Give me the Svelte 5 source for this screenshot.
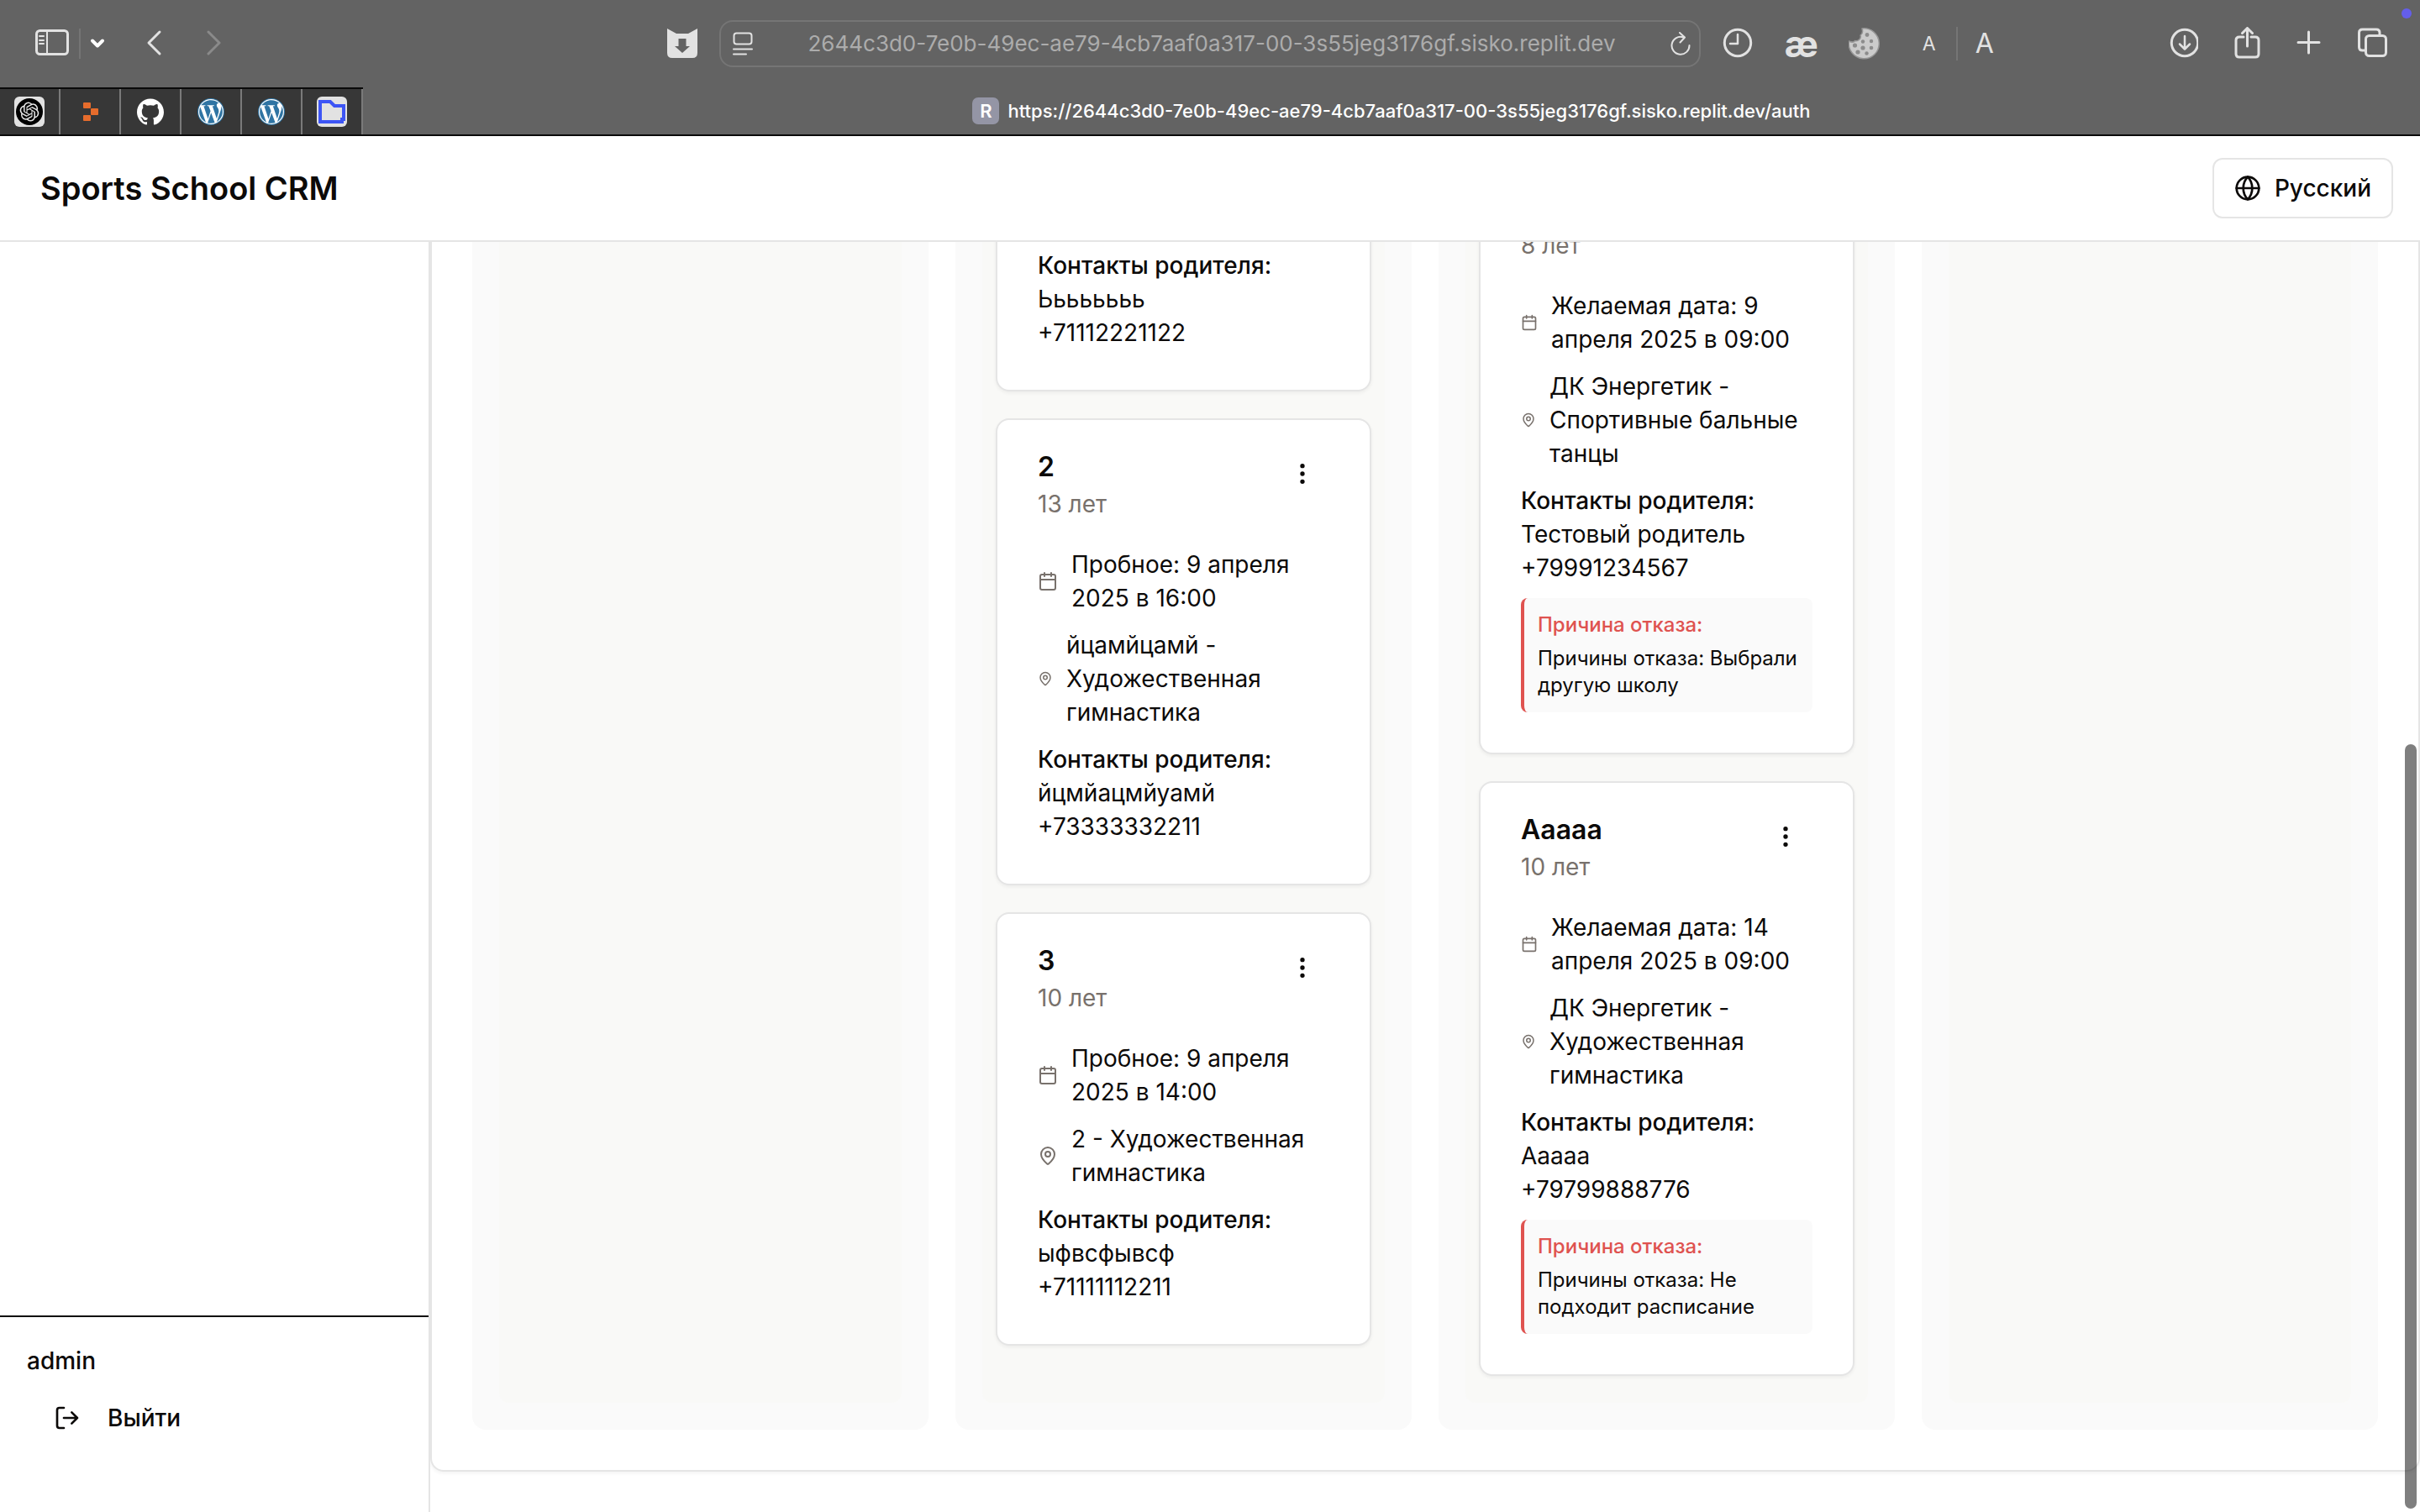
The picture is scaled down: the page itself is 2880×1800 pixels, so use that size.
<script lang="ts">
  type Row = { kind: 'calendar' | 'pin'; size: 'small' | 'narrow' | 'regular'; text: string };
  type Student = {
    name?: string;
    age?: string;
    rows: Row[];
    parent: string;
    phone: string;
    reason?: string;
  };
  type Column = { id: string; short?: boolean; students: Student[] };

  const host = '2644c3d0-7e0b-49ec-ae79-4cb7aaf0a317-00-3s55jeg3176gf.sisko.replit.dev';

  const columns: Column[] = [
    { id: 'new', students: [] },
    {
      id: 'trial',
      short: true,
      students: [
        { rows: [], parent: 'Ьььььььь', phone: '+71112221122' },
        {
          name: '2',
          age: '13 лет',
          rows: [
            { kind: 'calendar', size: 'regular', text: 'Пробное: 9 апреля\n2025 в 16:00' },
            { kind: 'pin', size: 'small', text: 'йцамйцамй -\nХудожественная\nгимнастика' }
          ],
          parent: 'йцмйацмйуамй',
          phone: '+73333332211'
        },
        {
          name: '3',
          age: '10 лет',
          rows: [
            { kind: 'calendar', size: 'regular', text: 'Пробное: 9 апреля\n2025 в 14:00' },
            { kind: 'pin', size: 'regular', text: '2 - Художественная\nгимнастика' }
          ],
          parent: 'ыфвсфывсф',
          phone: '+71111112211'
        }
      ]
    },
    {
      id: 'refused',
      students: [
        {
          age: '8 лет',
          rows: [
            { kind: 'calendar', size: 'narrow', text: 'Желаемая дата: 9\nапреля 2025 в 09:00' },
            { kind: 'pin', size: 'small', text: 'ДК Энергетик -\nСпортивные бальные\nтанцы' }
          ],
          parent: 'Тестовый родитель',
          phone: '+79991234567',
          reason: 'Причины отказа: Выбрали\nдругую школу'
        },
        {
          name: 'Ааааа',
          age: '10 лет',
          rows: [
            { kind: 'calendar', size: 'narrow', text: 'Желаемая дата: 14\nапреля 2025 в 09:00' },
            { kind: 'pin', size: 'small', text: 'ДК Энергетик -\nХудожественная\nгимнастика' }
          ],
          parent: 'Ааааа',
          phone: '+79799888776',
          reason: 'Причины отказа: Не\nподходит расписание'
        }
      ]
    },
    { id: 'archive', students: [] }
  ];
</script>

{#snippet wordpress()}
  <svg class="fav" viewBox="0 0 36 36" aria-hidden="true">
    <circle cx="18" cy="18" r="16" fill="#2f74a3" />
    <circle cx="18" cy="18" r="15" fill="#fff" />
    <g transform="translate(2.6 2.6) scale(1.283)" fill="#2f74a3">
      <path d="M21.469 6.825c.84 1.537 1.318 3.3 1.318 5.175 0 3.979-2.156 7.456-5.363 9.325l3.295-9.527c.615-1.54.82-2.771.82-3.864 0-.405-.026-.78-.07-1.11m-7.981.105c.647-.03 1.232-.105 1.232-.105.582-.075.514-.93-.067-.899 0 0-1.755.135-2.88.135-1.064 0-2.85-.15-2.85-.15-.585-.03-.661.855-.075.885 0 0 .54.061 1.125.09l1.68 4.605-2.37 7.08L5.354 6.9c.649-.03 1.234-.1 1.234-.1.585-.075.516-.93-.065-.896 0 0-1.746.138-2.874.138-.2 0-.438-.008-.69-.015C4.911 3.15 8.235 1.215 12 1.215c2.809 0 5.365 1.072 7.286 2.833-.046-.003-.091-.009-.141-.009-1.06 0-1.812.923-1.812 1.914 0 .89.513 1.643 1.06 2.531.411.72.89 1.643.89 2.977 0 .915-.354 1.994-.821 3.479l-1.075 3.585-3.9-11.61.001.014zM12 22.784c-1.059 0-2.081-.153-3.048-.437l3.237-9.406 3.315 9.087c.024.053.05.101.078.149-1.12.393-2.325.609-3.582.609M1.211 12c0-1.564.336-3.05.935-4.39L7.29 21.709C3.694 19.96 1.212 16.271 1.211 12" />
    </g>
  </svg>
{/snippet}

{#snippet rowIcon(row: Row)}
  <svg class="row-icon {row.size}" viewBox="0 0 24 24" aria-hidden="true">
    {#if row.kind === 'calendar'}
      <path d="M8 2v4M16 2v4M3 10h18" />
      <rect x="3" y="4" width="18" height="18" rx="2" />
    {:else}
      <path d="M20 10c0 4.993-5.539 10.193-7.399 11.799a1 1 0 0 1-1.202 0C9.539 20.193 4 14.993 4 10a8 8 0 0 1 16 0" />
      <circle cx="12" cy="10" r="3" />
    {/if}
  </svg>
{/snippet}

<div class="window">
  <div class="browser">
    <div class="toolbar">
      <div class="tools">
        <button class="tool" aria-label="Боковое меню">
          <svg viewBox="0 0 40 40"><rect x="1.5" y="4.5" width="37" height="28" rx="4" /><path d="M14 5v27M5 11h5M5 16h5M5 20h5" stroke-width="2" /></svg>
        </button>
        <span class="divider first"></span>
        <button class="tool slim" aria-label="Группы вкладок">
          <svg viewBox="0 0 24 40"><path class="bright" d="M6 16.500l6 6 6-6" /></svg>
        </button>
        <button class="tool" aria-label="Назад">
          <svg viewBox="0 0 40 40"><path d="M30 6L17 19l13 13" /></svg>
        </button>
        <button class="tool dim" aria-label="Вперёд" disabled>
          <svg viewBox="0 0 40 40"><path d="M16 6l13 13-13 13" /></svg>
        </button>
        <button class="tool shield" aria-label="Загрузчик">
          <svg viewBox="0 0 40 40"><path class="solid" d="M2 2l11 6v5h14V8l11-6v29q0 6-6 6H8q-6 0-6-6z" /><path class="solid" d="M13 8h14v6H13z" /><path class="hole" d="M15.500 14h9v9h4.500L20 31l-9-8h4.500z" /></svg>
        </button>
      </div>

      <div class="address">
        <svg class="page-icon" viewBox="0 0 24 30" aria-hidden="true"><rect x="1.500" y="2.500" width="21" height="13" rx="3" /><path d="M1 21.500h22M1 27.500h15" /></svg>
        <input class="url" type="text" aria-label="Адрес" value={host} readonly />
        <button class="reload" aria-label="Обновить">
          <svg viewBox="0 0 24 28"><path d="M15 6.200A10.500 10.500 0 1 0 22.500 16M11 1l6 5.500-5.500 6" /></svg>
        </button>
      </div>

      <div class="tools right">
        <button class="tool" aria-label="История">
          <svg viewBox="0 0 40 40"><circle cx="20" cy="19" r="15.700" /><path d="M20 9v11H11" stroke-width="2.500" /></svg>
        </button>
        <button class="tool ae" aria-label="Расширение">æ</button>
        <button class="tool" aria-label="Cookies">
          <svg viewBox="2 0 40 40">
            <path d="M18 2A18 18 0 1 1 2.500 17c3 1.500 6 1.500 7-.500 4 1 8-3 6.500-6.500 3-2 3-5 2-8z" fill="#cbcbcb" stroke="#969696" stroke-width="1.500" />
            <g class="crumbs"><circle cx="24" cy="9.500" r="2.400" /><circle cx="29" cy="17" r="2.200" /><circle cx="19" cy="17.500" r="2.200" /><circle cx="9.500" cy="22" r="2.600" /><circle cx="19" cy="25" r="2.600" /><circle cx="29" cy="25" r="2.300" /><circle cx="13" cy="30" r="2.600" /><circle cx="23.500" cy="31.500" r="2.200" /></g>
          </svg>
        </button>
        <button class="tool small-a" aria-label="Уменьшить текст">A</button>
        <span class="divider"></span>
        <button class="tool large-a" aria-label="Увеличить текст">A</button>
        <button class="tool push" aria-label="Загрузки">
          <svg viewBox="-6 0 40 40"><circle cx="18" cy="19" r="15.700" /><path d="M18 11v15M12 20.500l6 6 6-6" stroke-width="2.500" /></svg>
        </button>
        <button class="tool" aria-label="Поделиться">
          <svg viewBox="-4 0 40 40"><path d="M14 12H9q-4 0-4 4v16q0 4 4 4h19q4 0 4-4V16q0-4-4-4h-5M18.500 23V1.500M12.500 7.500l6-6 6 6" /></svg>
        </button>
        <button class="tool" aria-label="Новая вкладка">
          <svg viewBox="-2 0 40 40"><path d="M17.500 6v25M5 18.500h25" /></svg>
        </button>
        <button class="tool" aria-label="Все вкладки">
          <svg viewBox="0 0 40 40"><rect x="11.500" y="10.500" width="24" height="24" rx="4" /><path d="M11 28H7.500q-4 0-4-4V7q0-4 4-4H24q4 0 4 4v3" /></svg>
        </button>
      </div>
      <span class="indicator"></span>
    </div>

    <div class="tabs">
      <div class="pinned">
        <button class="pin-tab" aria-label="ChatGPT">
          <svg class="fav" viewBox="0 0 36 36"><rect width="36" height="36" rx="6" fill="#e2e2e2" /><circle cx="18" cy="18" r="16" fill="#000" /><g transform="translate(6.600 6.600) scale(.95)" fill="#e8e8e8"><path d="M22.282 9.821a5.985 5.985 0 0 0-.516-4.911 6.046 6.046 0 0 0-6.51-2.9A6.065 6.065 0 0 0 4.981 4.182a5.985 5.985 0 0 0-3.998 2.9 6.046 6.046 0 0 0 .743 7.097 5.98 5.98 0 0 0 .511 4.911 6.051 6.051 0 0 0 6.515 2.9A5.985 5.985 0 0 0 13.26 24a6.056 6.056 0 0 0 5.772-4.206 5.99 5.99 0 0 0 3.998-2.9 6.056 6.056 0 0 0-.748-7.073zM13.26 22.43a4.476 4.476 0 0 1-2.876-1.041l.142-.08 4.778-2.758a.795.795 0 0 0 .393-.682v-6.737l2.02 1.169a.071.071 0 0 1 .038.052v5.583a4.504 4.504 0 0 1-4.495 4.494zM3.6 18.304a4.47 4.47 0 0 1-.535-3.014l.142.085 4.783 2.759a.771.771 0 0 0 .78 0l5.843-3.369v2.332a.08.08 0 0 1-.033.062L9.74 19.95a4.5 4.5 0 0 1-6.14-1.646zM2.34 7.896a4.485 4.485 0 0 1 2.366-1.973V11.6a.766.766 0 0 0 .388.677l5.815 3.354-2.02 1.169a.076.076 0 0 1-.072 0l-4.83-2.787A4.504 4.504 0 0 1 2.34 7.872zm16.597 3.855l-5.833-3.387L15.119 7.2a.076.076 0 0 1 .071 0l4.83 2.791a4.494 4.494 0 0 1-.676 8.105v-5.678a.79.79 0 0 0-.407-.667zm2.01-3.023l-.141-.085-4.774-2.782a.776.776 0 0 0-.785 0L9.409 9.23V6.897a.066.066 0 0 1 .028-.061l4.83-2.787a4.5 4.5 0 0 1 6.68 4.66zM8.307 12.863l-2.02-1.164a.08.08 0 0 1-.038-.057V6.075a4.5 4.5 0 0 1 7.375-3.454l-.142.08-4.778 2.758a.795.795 0 0 0-.393.681zm1.097-2.365l2.602-1.5 2.607 1.5v2.999l-2.597 1.5-2.607-1.5z" /></g></svg>
        </button>
        <button class="pin-tab" aria-label="Replit">
          <svg class="fav" viewBox="0 0 36 36" fill="#e66c2c"><rect x="10" y="7" width="9" height="7" rx="1" /><rect x="19" y="14" width="9" height="8" rx="1" /><rect x="10" y="22" width="9" height="7" rx="1" /></svg>
        </button>
        <button class="pin-tab" aria-label="GitHub">
          <svg class="fav" viewBox="0 0 36 36"><g transform="translate(2 2) scale(1.333)" fill="#fff"><path d="M12 .297c-6.630 0-12 5.373-12 12 0 5.303 3.438 9.800 8.205 11.385.600.113.820-.258.820-.577 0-.285-.010-1.040-.015-2.040-3.338.724-4.042-1.610-4.042-1.610C4.422 18.070 3.633 17.700 3.633 17.700c-1.087-.744.084-.729.084-.729 1.205.084 1.838 1.236 1.838 1.236 1.070 1.835 2.809 1.305 3.495.998.108-.776.417-1.305.760-1.605-2.665-.300-5.466-1.332-5.466-5.930 0-1.310.465-2.380 1.235-3.220-.135-.303-.540-1.523.105-3.176 0 0 1.005-.322 3.300 1.230.960-.267 1.980-.399 3-.405 1.020.006 2.040.138 3 .405 2.280-1.552 3.285-1.230 3.285-1.230.645 1.653.240 2.873.120 3.176.765.840 1.230 1.910 1.230 3.220 0 4.610-2.805 5.625-5.475 5.920.420.360.810 1.096.810 2.220 0 1.606-.015 2.896-.015 3.286 0 .315.210.690.825.570C20.565 22.092 24 17.592 24 12.297c0-6.627-5.373-12-12-12" /></g></svg>
        </button>
        <button class="pin-tab" aria-label="WordPress">{@render wordpress()}</button>
        <button class="pin-tab" aria-label="WordPress">{@render wordpress()}</button>
        <button class="pin-tab" aria-label="Файлы">
          <svg class="fav" viewBox="0 0 36 36"><rect width="36" height="36" rx="6" fill="#e2e2e2" /><path d="M4 30V6h12l5 5h11v16h-2v3z" fill="none" stroke="#3d55f5" stroke-width="4" /></svg>
        </button>
      </div>
      <button class="tab">
        <span class="badge">R</span>
        <span>https://{host}/auth</span>
      </button>
    </div>
  </div>

  <header class="header">
    <h1>Sports School CRM</h1>
    <button class="language">
      <svg class="icon" viewBox="0 0 24 24" aria-hidden="true"><circle cx="12" cy="12" r="10" /><path d="M12 2a14.500 14.500 0 0 0 0 20 14.500 14.500 0 0 0 0-20M2 12h20" /></svg>
      Русский
    </button>
  </header>

  <div class="body">
    <aside class="sidebar">
      <div class="account">
        <p class="user">admin</p>
        <button class="logout">
          <svg class="icon" viewBox="0 0 24 24" aria-hidden="true"><path d="M9 21H5a2 2 0 0 1-2-2V5a2 2 0 0 1 2-2h4M16 17l5-5-5-5M21 12H9" /></svg>
          Выйти
        </button>
      </div>
    </aside>

    <main class="content">
      <section class="board">
        {#each columns as column (column.id)}
          <div class="column">
            <div class="cards" class:short={column.short}>
              {#each column.students as student}
                <article class="card">
                  <header class="card-head">
                    <div>
                      <h2>{student.name ?? ''}</h2>
                      {#if student.age}
                        <p class="age">{student.age}</p>
                      {/if}
                    </div>
                    {#if student.name}
                      <button class="more" aria-label="Действия">
                        <svg class="icon dots" viewBox="0 0 24 24"><circle cx="12" cy="5" r="1" /><circle cx="12" cy="12" r="1" /><circle cx="12" cy="19" r="1" /></svg>
                      </button>
                    {/if}
                  </header>
                  <div class="card-body">
                    {#each student.rows as row}
                      <div class="row">
                        {@render rowIcon(row)}
                        <span>{row.text}</span>
                      </div>
                    {/each}
                    <div>
                      <p class="label">Контакты родителя:</p>
                      <p>{student.parent}</p>
                      <p>{student.phone}</p>
                    </div>
                    {#if student.reason}
                      <div class="reason">
                        <p class="reason-title">Причина отказа:</p>
                        <p class="reason-text">{student.reason}</p>
                      </div>
                    {/if}
                  </div>
                </article>
              {/each}
            </div>
          </div>
        {/each}
      </section>
    </main>
    <div class="scrollbar"></div>
  </div>
</div>

<style>
  :global(body) {
    margin: 0;
    background: #fff;
  }
  .window {
    display: flex;
    flex-direction: column;
    height: 100vh;
    overflow: hidden;
    font-family: Inter, 'Liberation Sans', sans-serif;
    font-size: 28px;
    line-height: 40px;
    color: #0c0a09;
  }
  h1, h2, p {
    margin: 0;
  }
  button {
    padding: 0;
    border: 0;
    background: none;
    color: inherit;
    font: inherit;
  }
  svg {
    flex-shrink: 0;
    display: block;
  }

  .browser {
    background: #636363;
    border-bottom: 2px solid #0a0a0a;
  }
  .toolbar {
    position: relative;
    display: grid;
    grid-template-columns: 22fr 30fr 22fr;
    align-items: center;
    height: 104px;
  }
  .tools {
    display: flex;
    align-items: center;
    gap: 32px;
    padding: 0 24px 0 42px;
  }
  .tools.right {
    gap: 36px;
    padding: 0 36px 0 24px;
  }
  .tool {
    width: 40px;
    height: 40px;
    flex-shrink: 0;
    color: #e2e2e2;
  }
  .tool svg {
    width: 100%;
    height: 40px;
  }
  .tool svg,
  .address svg {
    fill: none;
    stroke: #e2e2e2;
    stroke-width: 3;
    stroke-linecap: round;
    stroke-linejoin: round;
  }
  .slim {
    width: 24px;
  }
  .tool .bright {
    stroke: #fff;
    stroke-width: 4;
  }
  .tool.dim svg {
    stroke: #8a8a8a;
  }
  .tool .solid {
    fill: #e2e2e2;
    stroke: none;
  }
  .tool .hole {
    fill: #636363;
    stroke: none;
  }
  .crumbs {
    fill: #8c8c8c;
    stroke: none;
  }
  .shield,
  .push {
    margin-left: auto;
  }
  .divider {
    width: 2px;
    height: 40px;
    margin: 0 -24px;
    background: #757575;
  }
  .divider.first {
    height: 36px;
    margin: 0 -24px 0 -20px;
  }
  .ae {
    font-size: 44px;
    font-weight: 700;
    line-height: 36px;
  }
  .small-a {
    font-size: 23px;
  }
  .large-a {
    font-size: 32px;
  }
  .indicator {
    position: absolute;
    top: 10px;
    right: 10px;
    width: 12px;
    height: 12px;
    border-radius: 50%;
    background: #645eea;
  }
  .address {
    display: flex;
    align-items: center;
    gap: 16px;
    box-sizing: border-box;
    height: 56px;
    padding: 0 10px 0 14px;
    border: 2px solid #757575;
    border-radius: 16px;
  }
  .address .page-icon {
    width: 24px;
    height: 30px;
    stroke-width: 2;
  }
  .url {
    flex: 1;
    min-width: 0;
    padding: 0;
    border: 0;
    outline: 0;
    background: none;
    color: #acacac;
    font: inherit;
    font-size: 26px;
    text-align: center;
  }
  .reload svg {
    width: 24px;
    height: 28px;
    stroke-width: 2;
  }

  .tabs {
    display: flex;
    height: 56px;
  }
  .pinned {
    display: flex;
    box-sizing: border-box;
    border-top: 2px solid #0a0a0a;
    background: #373737;
  }
  .pin-tab {
    display: flex;
    align-items: center;
    justify-content: center;
    box-sizing: border-box;
    width: 72px;
    border-right: 2px solid #7a7a7a;
  }
  .fav {
    width: 36px;
    height: 36px;
  }
  .tab {
    flex: 1;
    display: flex;
    align-items: center;
    justify-content: center;
    gap: 10px;
    color: #fff;
    font-size: 22px;
    font-weight: 500;
  }
  .badge {
    width: 32px;
    height: 32px;
    border-radius: 7px;
    background: #9495a5;
    font-weight: 600;
    line-height: 32px;
    text-align: center;
  }

  .header {
    display: flex;
    align-items: center;
    justify-content: space-between;
    box-sizing: border-box;
    flex-shrink: 0;
    height: 126px;
    padding: 0 32px 0 48px;
    border-bottom: 2px solid #e5e5e5;
    background: #fff;
  }
  h1 {
    font-size: 38px;
    font-weight: 600;
    line-height: 56px;
  }
  .icon {
    width: 32px;
    height: 32px;
    fill: none;
    stroke: currentColor;
    stroke-width: 2;
    stroke-linecap: round;
    stroke-linejoin: round;
  }
  .language {
    display: flex;
    align-items: center;
    gap: 16px;
    height: 72px;
    padding: 0 24px;
    border: 2px solid #e5e5e5;
    border-radius: 12px;
    font-weight: 500;
  }

  .body {
    position: relative;
    flex: 1;
    display: flex;
    min-height: 0;
  }
  .sidebar {
    display: flex;
    flex-direction: column;
    justify-content: flex-end;
    box-sizing: border-box;
    width: 512px;
    flex-shrink: 0;
    border-right: 2px solid #e5e5e5;
  }
  .account {
    padding: 32px 32px 76px;
    border-top: 2px solid #0c0a09;
  }
  .user,
  .logout {
    font-weight: 500;
  }
  .logout {
    display: flex;
    align-items: center;
    gap: 32px;
    height: 72px;
    margin-top: 12px;
    padding: 0 32px;
  }
  .content {
    flex: 1;
    display: flex;
    flex-direction: column;
    justify-content: flex-end;
    min-width: 0;
    overflow: hidden;
    padding-bottom: 48px;
  }
  .board {
    display: grid;
    grid-template-columns: repeat(4, 1fr);
    gap: 32px;
    padding: 48px;
    border: 2px solid #e5e5e5;
    border-radius: 16px;
    box-shadow: 0 2px 4px rgba(0, 0, 0, 0.05);
  }
  .column {
    display: flex;
    flex-direction: column;
    padding: 32px;
    border-radius: 16px;
    background: #fafafa;
  }
  .cards {
    flex: 1;
    display: flex;
    flex-direction: column;
    justify-content: flex-end;
    gap: 32px;
    padding: 16px 16px 32px;
    border-radius: 12px;
    background: #f9f9f7;
  }
  .cards.short {
    padding-bottom: 68px;
  }
  .card {
    border: 2px solid #e5e5e5;
    border-radius: 16px;
    background: #fff;
    box-shadow: 0 2px 4px rgba(0, 0, 0, 0.05);
  }
  .card-head {
    display: flex;
    align-items: flex-start;
    justify-content: space-between;
    padding: 32px 48px;
  }
  h2 {
    min-height: 48px;
    font-size: 32px;
    font-weight: 600;
    line-height: 48px;
  }
  .age {
    color: #78716c;
  }
  .more {
    display: flex;
    align-items: center;
    justify-content: center;
    width: 64px;
    height: 64px;
  }
  .icon.dots {
    fill: currentColor;
  }
  .card-body {
    display: flex;
    flex-direction: column;
    gap: 16px;
    padding: 0 48px 48px;
  }
  .row {
    display: flex;
    align-items: center;
    gap: 16px;
    white-space: pre;
  }
  .row-icon {
    width: 24px;
    height: 24px;
    fill: none;
    stroke: #78716c;
    stroke-width: 2;
    stroke-linecap: round;
    stroke-linejoin: round;
  }
  .row-icon.narrow {
    width: 20px;
    height: 20px;
  }
  .row-icon.small {
    width: 18px;
    height: 18px;
  }
  .label {
    font-weight: 500;
  }
  .reason {
    padding: 16px;
    border-left: 4px solid #df5350;
    border-radius: 8px;
    background: #fafafa;
    font-size: 24px;
    line-height: 32px;
  }
  .reason-title {
    margin-bottom: 8px;
    color: #df5350;
    font-weight: 500;
  }
  .reason-text {
    white-space: pre;
  }
  .scrollbar {
    position: absolute;
    right: 4px;
    bottom: 4px;
    width: 14px;
    height: 60.2%;
    border-radius: 7px;
    background: rgba(0, 0, 0, 0.5);
  }
</style>
